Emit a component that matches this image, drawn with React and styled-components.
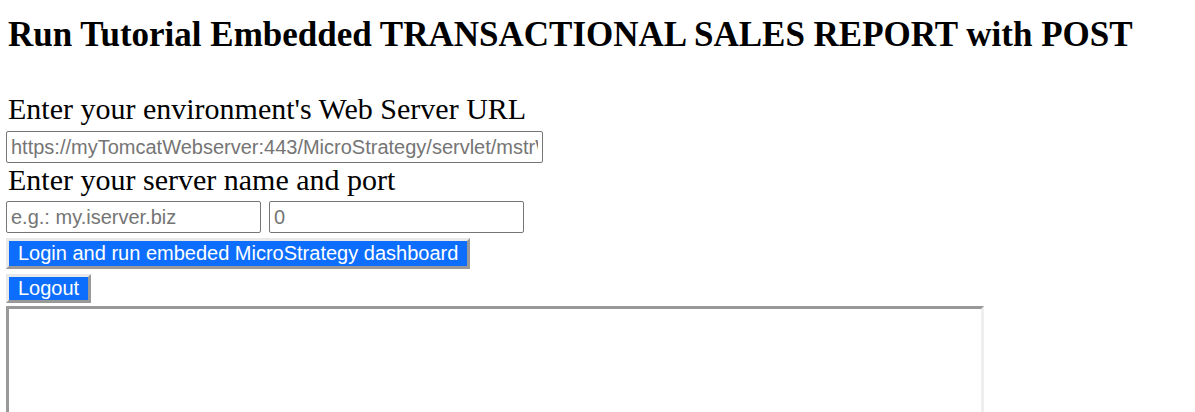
import React from 'react'
import styled, { createGlobalStyle } from 'styled-components'

const GlobalStyle = createGlobalStyle`
  html, body {
    margin: 0;
    padding: 0;
    background: #fff;
  }
  body {
    font-family: "Liberation Serif", "Times New Roman", serif;
    color: #000;
  }
`

const Page = styled.div`
  padding: 0 6px;
  height: 412px;
  overflow: hidden;
`

const Title = styled.h2`
  margin: 0;
  padding: 15px 0 0 2px;
  font-size: 35px;
  line-height: 40px;
  font-weight: bold;
`

const Label = styled.div`
  padding-left: 2px;
  font-size: 30px;
  line-height: 34px;
  margin-top: ${p => p.$top || 0}px;
`

const InputRow = styled.div`
  display: flex;
  gap: 8px;
  margin-top: ${p => p.$top || 0}px;
`

const TextInput = styled.input`
  box-sizing: border-box;
  width: ${p => p.$w}px;
  height: 32px;
  margin: 0;
  padding: 0 4px;
  border: 1px solid #767676;
  border-radius: 2px;
  font-family: "Liberation Sans", Arial, sans-serif;
  font-size: 20px;
  color: #000;
  background: #fff;
  outline: none;

  &::placeholder {
    color: #757575;
  }
`

const ActionButton = styled.button`
  display: block;
  box-sizing: border-box;
  height: ${p => p.$h}px;
  margin: ${p => p.$top || 0}px 0 0 0;
  padding: 0 9px;
  border-style: solid;
  border-width: 3px;
  border-color: #e9e9e9 #999 #999 #e9e9e9;
  background: #0d6efd;
  color: #fff;
  font-family: "Liberation Sans", Arial, sans-serif;
  font-size: 20px;
  line-height: 23px;
  cursor: pointer;
`

const Frame = styled.div`
  box-sizing: border-box;
  width: 978px;
  height: 200px;
  margin-top: ${p => p.$top || 0}px;
  border-style: solid;
  border-width: 3px;
  border-color: #999 #eee #eee #999;
  background: #fff;
`

export default function App() {
  return (
    <>
      <GlobalStyle />
      <Page>
        <Title>Run Tutorial Embedded TRANSACTIONAL SALES REPORT with POST</Title>
        <Label $top={37}>Enter your environment's Web Server URL</Label>
        <InputRow $top={5}>
          <TextInput $w={537} placeholder="https://myTomcatWebserver:443/MicroStrategy/servlet/mstrWeb" />
        </InputRow>
        <Label>Enter your server name and port</Label>
        <InputRow $top={4}>
          <TextInput $w={255} placeholder="e.g.: my.iserver.biz" />
          <TextInput $w={255} placeholder="0" />
        </InputRow>
        <ActionButton $h={31} $top={5}>Login and run embeded MicroStrategy dashboard</ActionButton>
        <ActionButton $h={29} $top={5}>Logout</ActionButton>
        <Frame $top={3} />
      </Page>
    </>
  )
}
